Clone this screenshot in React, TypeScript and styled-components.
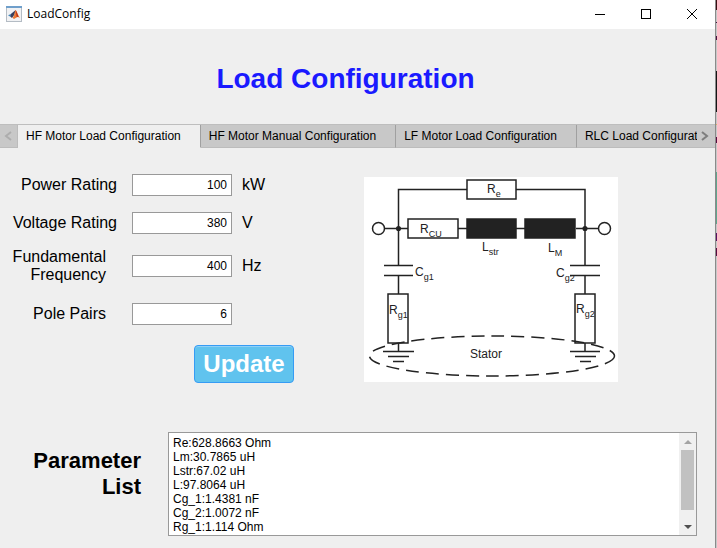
import React from "react";
import styled, { createGlobalStyle } from "styled-components";

const GlobalStyle = createGlobalStyle`
  *, *::before, *::after { box-sizing: border-box; }
  html, body, #root { height: 100%; margin: 0; }
  body {
    overflow: hidden;
    background: #efefef;
    color: #000;
    font-family: "Liberation Sans", Arial, sans-serif;
    font-size: 12px;
  }
`;

const Desktop = styled.div`
  display: flex;
  min-height: 100%;
`;

const Window = styled.div`
  flex: 1;
  min-width: 0;
  display: flex;
  flex-direction: column;
  background: #efefef;
  border-right: 1px solid #8a8a8a;
`;

const Backdrop = styled.div`
  width: 1px;
  background: linear-gradient(
    #3a0d12 0 10px, #c8c8c8 10px 22px, #4a1040 22px 23px, #c8c8c8 23px 36px,
    #4a1040 36px 40px, #c8c8c8 40px 71px, #151515 71px 112px, #c8c8c8 112px 124px,
    #e0b060 124px 125px, #c8c8c8 125px 137px, #5a0a40 137px 143px, #c8c8c8 143px 172px,
    #5fa58c 172px 224px, #c8c8c8 224px 233px, #5a1060 233px 241px, #c8c8c8 241px 248px,
    #5a0a40 248px 256px, #c8c8c8 256px
  );
`;

const TitleBar = styled.header`
  display: flex;
  align-items: center;
  height: 29px;
  padding-left: 6px;
  padding-bottom: 2px;
  background: #fff;
`;

const WindowName = styled.span`
  flex: 1;
  padding-left: 5px;
  font: 12px/16px "Open Sans", "Noto Sans", sans-serif;
`;

const WindowButton = styled.button`
  display: grid;
  place-items: center;
  width: 46px;
  height: 27px;
  padding: 0;
  border: 0;
  background: none;
`;

const Heading = styled.h1`
  height: 95px;
  margin: 0;
  padding: 34px 24px 0 0;
  color: #1a1aff;
  font-size: 28px;
  line-height: 32px;
  text-align: center;
`;

const TabStrip = styled.nav`
  display: flex;
  height: 24px;
  background: #c8c8c8;
  border-top: 1px solid #bebebe;
`;

const ArrowButton = styled.button<{ $muted?: boolean }>`
  flex: none;
  display: grid;
  place-items: center;
  width: 18px;
  padding: 0 2px 0 0;
  border: 0;
  border-bottom: 1px solid #bcbcbc;
  border-right: ${(p) => (p.$muted ? "1px solid #bcbcbc" : "0")};
  background: #c8c8c8;
  color: ${(p) => (p.$muted ? "#adadad" : "#7d7d7d")};
`;

const TabList = styled.div`
  flex: 1;
  min-width: 0;
  display: flex;
  overflow: hidden;
`;

const Tab = styled.button<{ $active?: boolean }>`
  flex: none;
  padding: 0 19px 0 8px;
  border: 0;
  border-right: 1px solid #a0a0a0;
  border-bottom: 1px solid ${(p) => (p.$active ? "#efefef" : "#bcbcbc")};
  background: ${(p) => (p.$active ? "#efefef" : "#c8c8c8")};
  color: #000;
  font: inherit;
  white-space: nowrap;
`;

const Setup = styled.section`
  display: flex;
  gap: 64px;
  padding-top: 18px;
`;

const Form = styled.form`
  width: 300px;
`;

const Fields = styled.div`
  display: grid;
  grid-template-columns: 117px 100px 1fr;
  grid-template-rows: 38px 38px 48px 48px;
  column-gap: 15px;
  align-items: center;
`;

const FieldLabel = styled.label<{ $inset?: boolean }>`
  padding-right: ${(p) => (p.$inset ? "11px" : "0")};
  font-size: 16px;
  line-height: 18px;
  text-align: right;
`;

const NumberBox = styled.input`
  width: 100px;
  height: 22px;
  padding: 0 4px;
  border: 1px solid #999;
  background: #fff;
  color: #000;
  font: inherit;
  text-align: right;
`;

const Unit = styled.span`
  margin-left: -5px;
  font-size: 16px;
  line-height: 18px;
`;

const UpdateButton = styled.button`
  display: block;
  width: 100px;
  height: 38px;
  margin: 7px 6px 0 auto;
  padding: 0;
  border: 1px solid #369cf4;
  border-radius: 4px;
  background: #60c3ee;
  box-shadow: inset 0 1px #8fd0f8;
  color: #fff;
  font: bold 24px/34px "Liberation Sans", Arial, sans-serif;
`;

const Circuit = styled.svg`
  flex: none;
  width: 254px;
  height: 205px;
  margin-top: 11px;
  background: #fff;
`;

const Parameters = styled.section`
  display: flex;
  gap: 27px;
  padding: 49px 18px 12px 0;
`;

const ListLabel = styled.label`
  flex: none;
  width: 141px;
  padding: 16px 0 0 20px;
  font-size: 22px;
  font-weight: bold;
  line-height: 26px;
  text-align: right;
`;

const ListFrame = styled.div`
  flex: 1;
  min-width: 0;
  display: flex;
  height: 104px;
  border: 1px solid #999;
  background: #fff;
`;

const ListText = styled.textarea`
  flex: 1;
  min-width: 0;
  padding: 3px 4px 0;
  border: 0;
  overflow: hidden;
  resize: none;
  background: #fff;
  color: #000;
  font: inherit;
  line-height: 14px;
`;

const ScrollBar = styled.div`
  display: flex;
  flex-direction: column;
  width: 17px;
  padding: 0 2px;
  background: #f0f0f0;
`;

const ScrollButton = styled.button`
  display: grid;
  place-items: center;
  height: 17px;
  padding: 0;
  border: 0;
  background: none;
`;

const ScrollTrack = styled.div`
  flex: 1;
`;

const ScrollThumb = styled.div`
  height: 60px;
  background: #c1c1c1;
`;

const AppIcon = () => (
  <svg width="16" height="16" viewBox="0 0 16 16" aria-hidden="true">
    <rect x="0.5" y="0.5" width="15" height="15" fill="#f1f2f4" stroke="#b4bcc4" />
    <rect width="16" height="2" fill="#6f9fcb" />
    <path d="M2 9.3 5 8 8 5.5 7 9.500 5.500 11 4 10.500Z" fill="#4486b8" />
    <path d="M5 8 8 5.500 9.500 4 8.500 8.500 6 12 4.500 10.800Z" fill="#3a3f5c" />
    <path d="M9.500 4C11 5 12 9 14 12 12.500 11 11.500 10.500 10.500 11.500L8 13 6.500 11.700C8.500 10.500 8.500 6 9.500 4Z" fill="#ea7a35" />
    <path d="M9.600 4C10.500 5 11.500 8.500 12.500 10.600L10.700 10.900Z" fill="#b8301c" />
  </svg>
);

const fields = [
  { id: "power", label: "Power Rating", value: "100", unit: "kW" },
  { id: "voltage", label: "Voltage Rating", value: "380", unit: "V" },
  { id: "frequency", label: "Fundamental Frequency", value: "400", unit: "Hz", inset: true },
  { id: "poles", label: "Pole Pairs", value: "6", unit: "", inset: true },
];

const tabs = [
  "HF Motor Load Configuration",
  "HF Motor Manual Configuration",
  "LF Motor Load Configuration",
  "RLC Load Configuration",
];

const parameters = [
  "Re:628.8663 Ohm",
  "Lm:30.7865 uH",
  "Lstr:67.02 uH",
  "L:97.8064 uH",
  "Cg_1:1.4381 nF",
  "Cg_2:1.0072 nF",
  "Rg_1:1.114 Ohm",
].join("\n");

const Name = ({ x, y, main, sub }: { x: number; y: number; main: string; sub: string }) => (
  <text x={x} y={y} fontSize="12" fill="#222">
    {main}
    <tspan dy="4" fontSize="9">{sub}</tspan>
  </text>
);

const CircuitDiagram = () => (
  <Circuit viewBox="0 0 254 205" role="img" aria-label="Motor load equivalent circuit">
    <g fill="none" stroke="#222" strokeWidth="1.5">
      <path d="M34.5 88V12.5H103M152 12.5H221V88M21 51.5H44M94 51.5H103M152 51.5H161M212 51.5H234M34.5 98V117M221 98V117" />
      <path d="M20 88.5H49M20 98.5H49M206 88.5H236M206 98.5H236" />
      <rect x="103" y="3" width="49" height="19" />
      <rect x="44" y="42" width="50" height="19" />
      <rect x="24" y="117" width="20" height="49" />
      <rect x="211" y="117" width="20" height="49" />
      <rect x="103" y="42" width="49" height="19" fill="#222" />
      <rect x="161" y="42" width="50" height="19" fill="#222" />
      <circle cx="14.5" cy="51.5" r="6" />
      <circle cx="240.5" cy="51.5" r="6" />
      <circle cx="34.5" cy="51.5" r="1.8" fill="#222" />
      <circle cx="221" cy="51.5" r="1.8" fill="#222" />
      <path d="M34.5 166V174M221 166V174M19 174.5H50M24 179.5H45M29 184.5H40M206 174.5H236M211 179.5H232M216 184.5H227" />
      <ellipse cx="128" cy="179" rx="122.5" ry="20" strokeDasharray="13 7" />
    </g>
    <Name x={123} y={16} main="R" sub="e" />
    <Name x={56} y={56} main="R" sub="CU" />
    <Name x={118} y={74} main="L" sub="str" />
    <Name x={184} y={75} main="L" sub="M" />
    <Name x={51} y={99} main="C" sub="g1" />
    <Name x={192} y={100} main="C" sub="g2" />
    <Name x={25} y={137} main="R" sub="g1" />
    <Name x={212} y={136} main="R" sub="g2" />
    <text x="106" y="181" fontSize="12" fill="#222">Stator</text>
  </Circuit>
);

export default function App() {
  return (
    <Desktop>
      <GlobalStyle />
      <Window>
        <TitleBar>
          <AppIcon />
          <WindowName>LoadConfig</WindowName>
          <WindowButton aria-label="Minimize">
            <svg width="10" height="10"><path d="M0 5.5H10" stroke="#000" /></svg>
          </WindowButton>
          <WindowButton aria-label="Maximize">
            <svg width="10" height="10"><rect x="0.5" y="0.5" width="9" height="9" fill="none" stroke="#000" /></svg>
          </WindowButton>
          <WindowButton aria-label="Close">
            <svg width="10" height="10"><path d="M0 0 10 10M10 0 0 10" stroke="#000" /></svg>
          </WindowButton>
        </TitleBar>
        <Heading>Load Configuration</Heading>
        <TabStrip>
          <ArrowButton $muted aria-label="Previous tabs">
            <svg width="8" height="10"><path d="M7 1 2 5 7 9" fill="none" stroke="currentColor" strokeWidth="2" /></svg>
          </ArrowButton>
          <TabList role="tablist">
            {tabs.map((name, i) => (
              <Tab key={name} role="tab" aria-selected={i === 0} $active={i === 0}>{name}</Tab>
            ))}
          </TabList>
          <ArrowButton aria-label="More tabs">
            <svg width="8" height="10"><path d="M1 1 6 5 1 9" fill="none" stroke="currentColor" strokeWidth="2" /></svg>
          </ArrowButton>
        </TabStrip>
        <Setup>
          <Form onSubmit={(e) => e.preventDefault()}>
            <Fields>
              {fields.map((f) => (
                <React.Fragment key={f.id}>
                  <FieldLabel htmlFor={f.id} $inset={f.inset}>{f.label}</FieldLabel>
                  <NumberBox id={f.id} defaultValue={f.value} />
                  <Unit>{f.unit}</Unit>
                </React.Fragment>
              ))}
            </Fields>
            <UpdateButton type="submit">Update</UpdateButton>
          </Form>
          <CircuitDiagram />
        </Setup>
        <Parameters>
          <ListLabel htmlFor="parameters">Parameter List</ListLabel>
          <ListFrame>
            <ListText id="parameters" readOnly defaultValue={parameters} />
            <ScrollBar>
              <ScrollButton aria-label="Scroll up">
                <svg width="8" height="4"><path d="M0 4 4 0 8 4Z" fill="#a3a3a3" /></svg>
              </ScrollButton>
              <ScrollTrack><ScrollThumb /></ScrollTrack>
              <ScrollButton aria-label="Scroll down">
                <svg width="8" height="4"><path d="M0 0 4 4 8 0Z" fill="#505050" /></svg>
              </ScrollButton>
            </ScrollBar>
          </ListFrame>
        </Parameters>
      </Window>
      <Backdrop />
    </Desktop>
  );
}
